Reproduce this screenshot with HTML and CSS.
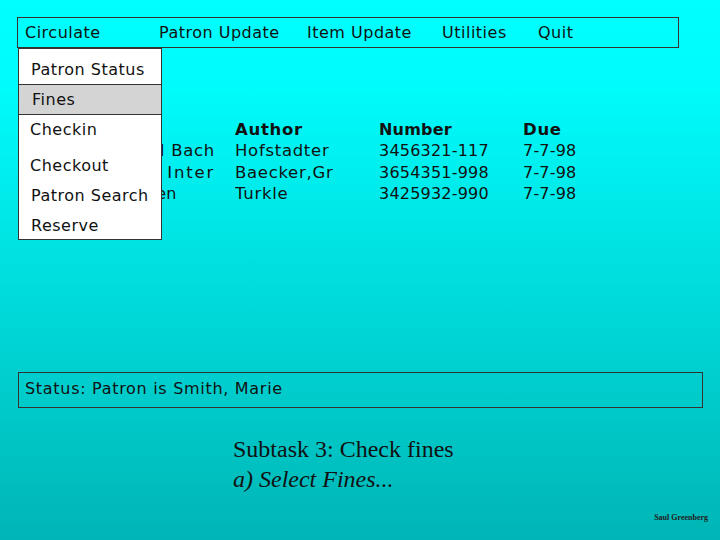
FILE: index.html
```html
<!DOCTYPE html>
<html>
<head>
<meta charset="utf-8">
<link rel="stylesheet" href="styles.css">
</head>
<body>
<div class="page">
  <div class="menubar">
    <span class="menu-item w-circulate">Circulate</span>
    <span class="menu-item w-patron">Patron Update</span>
    <span class="menu-item w-item">Item Update</span>
    <span class="menu-item w-util">Utilities</span>
    <span class="menu-item">Quit</span>
    <div class="dropdown">
      <div class="dd-item dd-status">Patron Status</div>
      <div class="dd-item dd-fines">Fines</div>
      <div class="dd-item dd-checkin">Checkin</div>
      <div class="dd-item dd-checkout">Checkout</div>
      <div class="dd-item dd-search">Patron Search</div>
      <div class="dd-item dd-reserve">Reserve</div>
    </div>
  </div>

  <div class="workarea">
    <div class="table">
      <div class="cell title bold">Title</div>
      <div class="cell author bold">Author</div>
      <div class="cell num bold">Number</div>
      <div class="cell bold">Due</div>

      <div class="cell title end"><span class="t-letters">Godel, Escher and Bach</span></div>
      <div class="cell author">Hofstadter</div>
      <div class="cell num">3456321-117</div>
      <div class="cell num">7-7-98</div>

      <div class="cell title end"><span class="t-letters">Readings in Human Computer <span class="wide">Inter</span></span></div>
      <div class="cell author">Baecker,Gr</div>
      <div class="cell num">3654351-998</div>
      <div class="cell num">7-7-98</div>

      <div class="cell title shifted">Life on the Screen</div>
      <div class="cell author">Turkle</div>
      <div class="cell num">3425932-990</div>
      <div class="cell num">7-7-98</div>
    </div>
  </div>

  <div class="statusbar">Status: Patron is Smith, Marie</div>

  <div class="subtask">
    <div>Subtask 3: Check fines</div>
    <div class="step">a) Select Fines...</div>
  </div>

  <div class="credit">Saul Greenberg</div>
</div>
</body>
</html>
```

FILE: styles.css
```css
html, body {
  margin: 0;
  padding: 0;
}

body {
  width: 720px;
  height: 540px;
  overflow: hidden;
}

.page {
  box-sizing: border-box;
  width: 720px;
  height: 540px;
  padding-top: 17px;
  display: flex;
  flex-direction: column;
  background: linear-gradient(to bottom, #00ffff 0px, #00fbfb 90px, #00b5b5 540px);
  font-family: "DejaVu Sans", "Verdana", sans-serif;
  font-size: 16px;
  letter-spacing: 0.5px;
  color: #111;
}

.menubar {
  position: relative;
  box-sizing: border-box;
  margin-left: 17px;
  width: 662px;
  height: 31px;
  border: 1px solid #333;
  padding-left: 7px;
  display: flex;
  align-items: center;
}

.menu-item {
  white-space: nowrap;
}

.w-circulate { width: 134px; }
.w-patron { width: 148px; }
.w-item { width: 135px; }
.w-util { width: 96px; }

.dropdown {
  position: absolute;
  top: 30px;
  left: 0;
  box-sizing: border-box;
  width: 144px;
  height: 192px;
  background: #ffffff;
  border: 1px solid #333;
  z-index: 2;
}

.dd-item {
  display: flex;
  align-items: center;
  padding-left: 12px;
  white-space: nowrap;
  box-sizing: border-box;
}

.dd-status {
  height: 36px;
  padding-top: 6px;
  border-bottom: 1px solid #333;
}

.dd-fines {
  height: 30px;
  background: #d4d4d4;
  border-bottom: 1px solid #333;
  padding-left: 13px;
}

.dd-checkin {
  height: 28px;
  padding-left: 11px;
}

.dd-checkout {
  height: 28px;
  margin-top: 8px;
  padding-left: 11px;
}

.dd-search {
  height: 30px;
  margin-top: 1px;
}

.dd-reserve {
  height: 30px;
}

.workarea {
  box-sizing: border-box;
  height: 324px;
  padding-top: 71px;
  padding-left: 22px;
}

.table {
  display: grid;
  grid-template-columns: 213px 144px 144px auto;
  line-height: 21.4px;
  font-size: 16.5px;
  letter-spacing: 0.7px;
}

.cell {
  white-space: nowrap;
  overflow: hidden;
}

.title {
  width: 193px;
  font-size: 16px;
  letter-spacing: 0;
}

.title.end {
  display: flex;
  justify-content: flex-end;
}

.title.shifted {
  padding-left: 9px;
  box-sizing: border-box;
}

.t-letters {
  font-size: 16.5px;
  letter-spacing: 0.7px;
}

.wide {
  letter-spacing: 1.8px;
}

.author {
  width: 102px;
}

.num {
  font-size: 16px;
  letter-spacing: 0.2px;
}

.bold {
  font-weight: bold;
}

.statusbar {
  box-sizing: border-box;
  margin-left: 18px;
  width: 685px;
  height: 36px;
  border: 1px solid #333;
  padding-left: 6px;
  padding-bottom: 3px;
  letter-spacing: 0.7px;
  display: flex;
  align-items: center;
}

.subtask {
  margin-top: 26px;
  margin-left: 233px;
  font-family: "Liberation Serif", "Times New Roman", serif;
  font-size: 24px;
  line-height: 30px;
  letter-spacing: 0;
  color: #111;
}

.step {
  font-style: italic;
}

.credit {
  margin-top: auto;
  align-self: flex-end;
  margin-right: 12px;
  margin-bottom: 18px;
  font-family: "Liberation Serif", "Times New Roman", serif;
  font-size: 8px;
  font-weight: bold;
  letter-spacing: 0;
  color: #222;
}
```
